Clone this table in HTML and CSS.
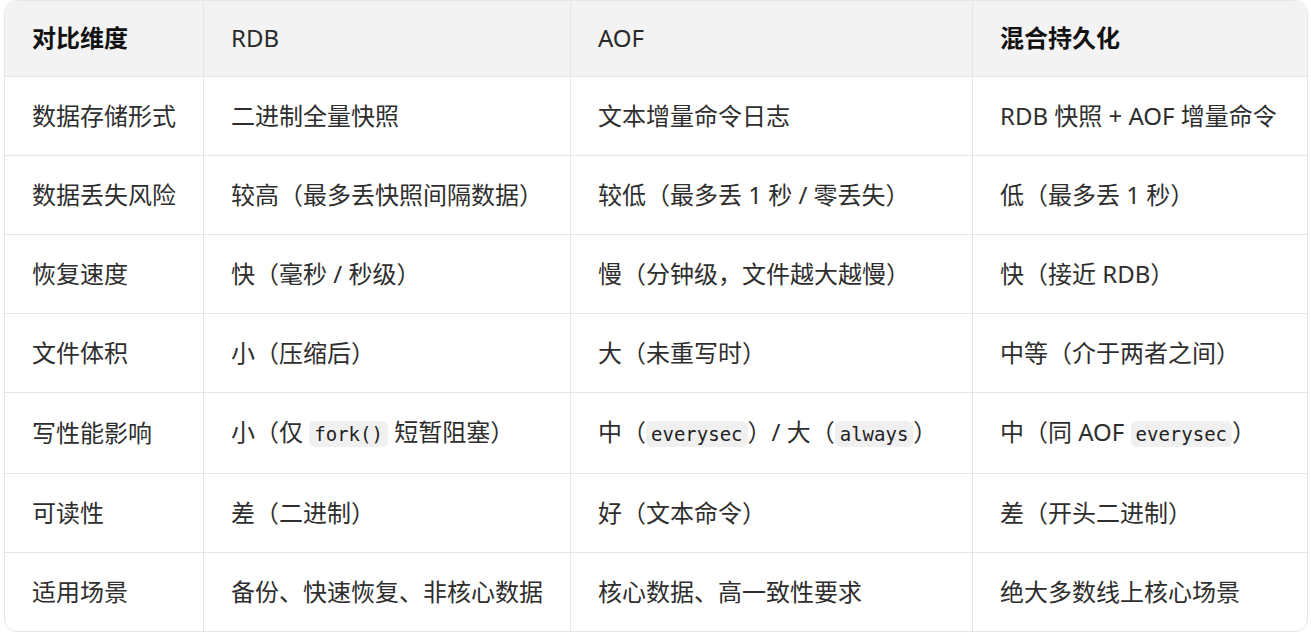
FILE: index.html
```html
<!DOCTYPE html>
<html lang="zh-CN">
<head>
<meta charset="utf-8">
<title>RDB vs AOF</title>
<link rel="stylesheet" href="styles.css">
</head>
<body>
<div class="wrap">
<table class="cmp">
  <colgroup>
    <col class="c1"><col class="c2"><col class="c3"><col class="c4">
  </colgroup>
  <thead>
    <tr><th>对比维度</th><th class="plain">RDB</th><th class="plain">AOF</th><th>混合持久化</th></tr>
  </thead>
  <tbody>
    <tr><td>数据存储形式</td><td>二进制全量快照</td><td>文本增量命令日志</td><td>RDB 快照 + AOF 增量命令</td></tr>
    <tr><td>数据丢失风险</td><td>较高（最多丢快照间隔数据）</td><td>较低（最多丢 1 秒 / 零丢失）</td><td>低（最多丢 1 秒）</td></tr>
    <tr><td>恢复速度</td><td>快（毫秒 / 秒级）</td><td>慢（分钟级，文件越大越慢）</td><td>快（接近 RDB）</td></tr>
    <tr><td>文件体积</td><td>小（压缩后）</td><td>大（未重写时）</td><td>中等（介于两者之间）</td></tr>
    <tr><td>写性能影响</td><td>小（仅 <code>fork()</code> 短暂阻塞）</td><td>中（<code>everysec</code>）/ 大（<code>always</code>）</td><td>中（同 AOF <code>everysec</code>）</td></tr>
    <tr><td>可读性</td><td>差（二进制）</td><td>好（文本命令）</td><td>差（开头二进制）</td></tr>
    <tr><td>适用场景</td><td>备份、快速恢复、非核心数据</td><td>核心数据、高一致性要求</td><td>绝大多数线上核心场景</td></tr>
  </tbody>
</table>
</div>
</body>
</html>
```

FILE: styles.css
```css
html, body {
  margin: 0;
  padding: 0;
  background: #ffffff;
}

.wrap {
  padding: 0 5px 0 4px;
}

.cmp {
  width: 1302px;
  table-layout: fixed;
  border-collapse: separate;
  border-spacing: 0;
  border: 1px solid #e6e6e6;
  border-radius: 13px;
  overflow: hidden;
  font-family: "Noto Sans", "Noto Sans CJK SC", sans-serif;
  font-size: 24px;
  color: #2e2e2e;
}

.c1 { width: 199px; }
.c2 { width: 367px; }
.c3 { width: 402px; }
.c4 { width: 334px; }

.cmp th,
.cmp td {
  text-align: left;
  line-height: 36px;
  padding: 21px 10px 21px 27px;
  border-right: 1px solid #e6e6e6;
  border-bottom: 1px solid #e6e6e6;
  white-space: nowrap;
  vertical-align: middle;
}

.cmp th:last-child,
.cmp td:last-child {
  border-right: none;
}

.cmp tbody tr:last-child td {
  border-bottom: none;
}

.cmp th {
  background: #f3f3f3;
  font-weight: 700;
  color: #111111;
  padding-top: 19px;
  padding-bottom: 20px;
}

.cmp th.plain {
  font-weight: 400;
  color: #2a2a2a;
}

.cmp code {
  font-family: "DejaVu Sans Mono", "Liberation Mono", monospace;
  font-size: 19px;
  background: #f0f0f0;
  color: #222222;
  border-radius: 6px;
  padding: 2px 5px;
}
```
